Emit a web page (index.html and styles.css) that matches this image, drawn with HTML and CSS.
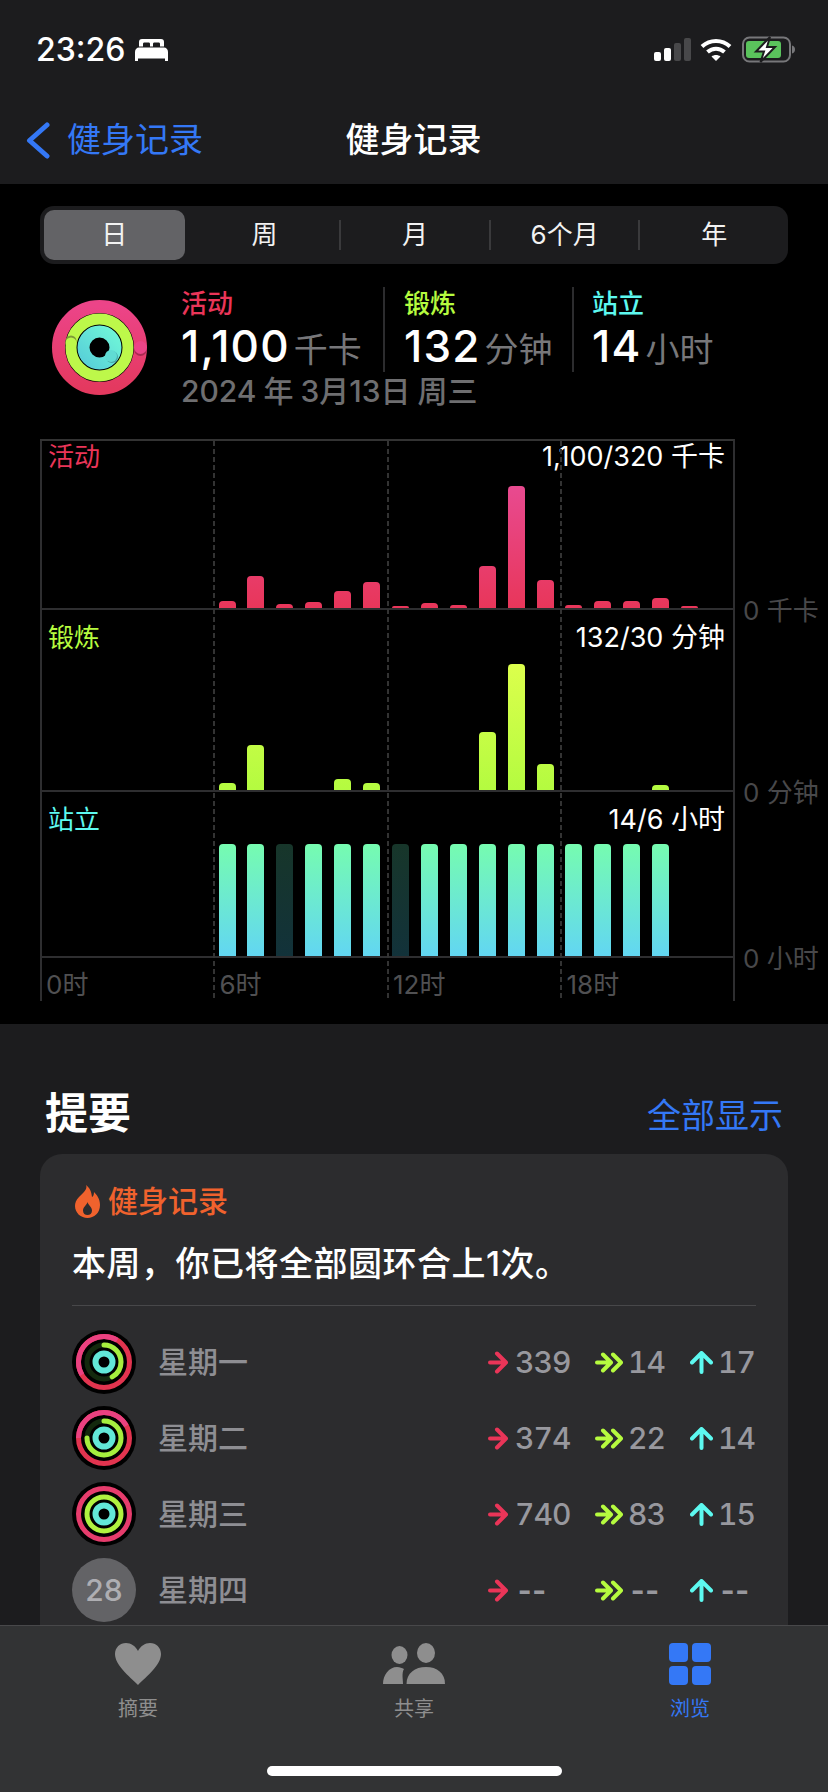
FILE: index.html
```html
<!DOCTYPE html>
<html lang="zh-CN">
<head>
    <meta charset="UTF-8">
    <meta name="viewport" content="width=device-width, initial-scale=1.0">
    <title>健身记录</title>
    <link rel="stylesheet" href="styles.css">
</head>
<body>

<div class="screen">
    <main class="content">
        <header class="top">
            <div class="status">
                <div class="status-left">
                    <span class="clock">23:26</span>
                    <svg class="bed" width="33" height="22" viewBox="0 0 33 22">
                        <path fill="#fff" d="M4 7.500V3C4 1 5 0 7 0H26C28 0 29 1 29 3V7.500H25V5C25 4 24.500 3.500 23.500 3.500H19.500C18.500 3.500 18 4 18 5V7.500H15V5C15 4 14.500 3.500 13.500 3.500H9.500C8.500 3.500 8 4 8 5V7.500Z"/>
                        <path fill="#fff" d="M0 13C0 10 2 8.500 4 8.500H29C31 8.500 33 10 33 13V22H30V19.500H3V22H0Z"/>
                    </svg>
                </div>
                <div class="status-right">
                    <svg width="37" height="23" viewBox="0 0 37 23">
                        <rect fill="#fff" x="0" y="14" width="7" height="9" rx="2"/>
                        <rect fill="#fff" x="10" y="10" width="7" height="13" rx="2"/>
                        <rect fill="#48484a" x="20" y="5" width="7" height="18" rx="2"/>
                        <rect fill="#48484a" x="30" y="0" width="7" height="23" rx="2"/>
                    </svg>
                    <svg width="32" height="23" viewBox="0 0 32 23">
                        <path fill="none" stroke="#fff" stroke-width="4" d="M2 8.5C10 1 22 1 30 8.5"/>
                        <path fill="none" stroke="#fff" stroke-width="4" d="M7.5 14C12.5 9.5 19.5 9.5 24.500 14"/>
                        <path fill="#fff" d="M11.500 18.500C14 16.500 18 16.500 20.500 18.500L16 23Z"/>
                    </svg>
                    <svg class="battery" width="53" height="27" viewBox="0 0 53 27">
                        <rect fill="none" stroke="#77777a" stroke-width="2" x="1" y="1.500" width="47" height="24" rx="6.500"/>
                        <rect fill="#5ac35c" x="4" y="5" width="35" height="17" rx="3"/>
                        <path fill="#77777a" d="M50 9.500C52 10 53 11.500 53 13.500C53 15.500 52 17 50 17.500Z"/>
                        <path fill="#fff" stroke="#1c1c1e" stroke-width="2" d="M28 1L14 15.500H22L18.500 26L33 11H25Z"/>
                    </svg>
                </div>
            </div>
            <nav class="nav">
                <a class="back" href="#">
                    <svg width="24" height="37" viewBox="0 0 24 37">
                        <path fill="none" stroke="#3478f6" stroke-width="5" stroke-linecap="round" stroke-linejoin="round" d="M21 3L3.500 18.500L21 34"/>
                    </svg>
                    <span>健身记录</span>
                </a>
                <h1 class="nav-title">健身记录</h1>
            </nav>
        </header>

        <section class="overview">
            <div class="segments">
                <span class="segment active">日</span>
                <span class="segment">周</span>
                <span class="segment line">月</span>
                <span class="segment line">6个月</span>
                <span class="segment line">年</span>
            </div>

            <div class="today">
                <svg class="today-ring" width="95" height="95" viewBox="0 0 95 95">
                    <defs>
                        <linearGradient id="bigRed" x1="0" y1="0" x2="0" y2="1">
                            <stop offset="0" stop-color="#ec4488"/>
                            <stop offset="1" stop-color="#e4395f"/>
                        </linearGradient>
                        <linearGradient id="bigCyan" x1="1" y1="0" x2="0" y2="1">
                            <stop offset="0" stop-color="#6ff5d8"/>
                            <stop offset="1" stop-color="#58d0d8"/>
                        </linearGradient>
                    </defs>
                    <circle cx="47.500" cy="47.500" r="41" fill="none" stroke="url(#bigRed)" stroke-width="13"/>
                    <circle cx="88.500" cy="49.500" r="6.500" fill="#a82a50"/>
                    <circle cx="88.500" cy="47.500" r="6.500" fill="#ec4488"/>
                    <circle cx="47.500" cy="47.500" r="28.500" fill="none" stroke="#bdf84a" stroke-width="11"/>
                    <circle cx="19" cy="41" r="5.500" fill="#7d9a38"/>
                    <circle cx="19" cy="43" r="5.500" fill="#bdf84a"/>
                    <circle cx="47.500" cy="47.500" r="16" fill="none" stroke="url(#bigCyan)" stroke-width="12"/>
                    <circle cx="60" cy="57" r="6" fill="#4aa8a8"/>
                    <circle cx="59" cy="56" r="6" fill="#60dcd4"/>
                </svg>
                <div class="today-text">
                    <div class="stats">
                        <div class="stat stat-move">
                            <div class="stat-label red">活动</div>
                            <div class="stat-value">1,100<small>千卡</small></div>
                        </div>
                        <div class="stat stat-exercise">
                            <div class="stat-label green">锻炼</div>
                            <div class="stat-value">132<small>分钟</small></div>
                        </div>
                        <div class="stat stat-stand">
                            <div class="stat-label cyan">站立</div>
                            <div class="stat-value">14<small>小时</small></div>
                        </div>
                    </div>
                    <div class="today-date">2024 年 3月13日 周三</div>
                </div>
            </div>

            <div class="chart">
                <div class="grid-lines"><i></i><i></i><i></i><i></i></div>

                <div class="chart-row row-move">
                    <div class="plot">
                        <div class="plot-head">
                            <span class="red">活动</span>
                            <span class="goal">1,100/320 千卡</span>
                        </div>
                        <div class="bars">
                            <i class="bar bar-red" style="height:7px"></i>
                            <i class="bar bar-red" style="height:32px"></i>
                            <i class="bar bar-red" style="height:4px"></i>
                            <i class="bar bar-red" style="height:6px"></i>
                            <i class="bar bar-red" style="height:17px"></i>
                            <i class="bar bar-red" style="height:26px"></i>
                            <i class="bar bar-red" style="height:2px"></i>
                            <i class="bar bar-red" style="height:5px"></i>
                            <i class="bar bar-red" style="height:3px"></i>
                            <i class="bar bar-red" style="height:42px"></i>
                            <i class="bar bar-red" style="height:122px"></i>
                            <i class="bar bar-red" style="height:28px"></i>
                            <i class="bar bar-red" style="height:3px"></i>
                            <i class="bar bar-red" style="height:7px"></i>
                            <i class="bar bar-red" style="height:7px"></i>
                            <i class="bar bar-red" style="height:10px"></i>
                            <i class="bar bar-red" style="height:2px"></i>
                        </div>
                    </div>
                    <span class="axis">0 千卡</span>
                </div>

                <div class="chart-row row-exercise">
                    <div class="plot">
                        <div class="plot-head">
                            <span class="green">锻炼</span>
                            <span class="goal">132/30 分钟</span>
                        </div>
                        <div class="bars">
                            <i class="bar bar-green" style="height:7px"></i>
                            <i class="bar bar-green" style="height:45px"></i>
                            <i class="bar bar-green" style="height:0"></i>
                            <i class="bar bar-green" style="height:0"></i>
                            <i class="bar bar-green" style="height:11px"></i>
                            <i class="bar bar-green" style="height:7px"></i>
                            <i class="bar bar-green" style="height:0"></i>
                            <i class="bar bar-green" style="height:0"></i>
                            <i class="bar bar-green" style="height:0"></i>
                            <i class="bar bar-green" style="height:58px"></i>
                            <i class="bar bar-green" style="height:126px"></i>
                            <i class="bar bar-green" style="height:26px"></i>
                            <i class="bar bar-green" style="height:0"></i>
                            <i class="bar bar-green" style="height:0"></i>
                            <i class="bar bar-green" style="height:0"></i>
                            <i class="bar bar-green" style="height:5px"></i>
                        </div>
                    </div>
                    <span class="axis">0 分钟</span>
                </div>

                <div class="chart-row row-stand">
                    <div class="plot">
                        <div class="plot-head">
                            <span class="cyan">站立</span>
                            <span class="goal">14/6 小时</span>
                        </div>
                        <div class="bars">
                            <i class="bar bar-cyan"></i>
                            <i class="bar bar-cyan"></i>
                            <i class="bar bar-dim"></i>
                            <i class="bar bar-cyan"></i>
                            <i class="bar bar-cyan"></i>
                            <i class="bar bar-cyan"></i>
                            <i class="bar bar-dim"></i>
                            <i class="bar bar-cyan"></i>
                            <i class="bar bar-cyan"></i>
                            <i class="bar bar-cyan"></i>
                            <i class="bar bar-cyan"></i>
                            <i class="bar bar-cyan"></i>
                            <i class="bar bar-cyan"></i>
                            <i class="bar bar-cyan"></i>
                            <i class="bar bar-cyan"></i>
                            <i class="bar bar-cyan"></i>
                        </div>
                    </div>
                    <span class="axis">0 小时</span>
                </div>

                <div class="hours">
                    <span>0时</span>
                    <span>6时</span>
                    <span>12时</span>
                    <span>18时</span>
                </div>
            </div>
        </section>

        <section class="summary">
            <div class="summary-head">
                <h2>提要</h2>
                <a href="#">全部显示</a>
            </div>

            <div class="card">
                <div class="card-title">
                    <svg width="25" height="33" viewBox="0 0 25 33">
                        <path fill="#f0622d" fill-rule="evenodd" d="M11 0C13 4 8 8 4 12C1 15 0 18 0 21C0 28 6 33 12.500 33C19 33 25 28 25 20C25 14 22 10 19 7C19 10 18 11.500 17 12C16.500 7 15 3 11 0ZM12.500 17C13 20 17 22 17 25.500C17 28.500 15 30 12.500 30C10 30 8 28.500 8 25.500C8 22 12 20 12.500 17Z"/>
                    </svg>
                    <span>健身记录</span>
                </div>
                <p class="card-text">本周&#xFF0C;你已将全部圆环合上1次。</p>

                <div class="days">
                    <div class="day">
                        <svg class="day-ring" width="64" height="64" viewBox="0 0 64 64">
                            <circle cx="32" cy="32" r="32" fill="#000"/>
                            <circle cx="32" cy="32" r="25.500" fill="none" stroke="#e2344f" stroke-width="5"/>
                            <circle class="arc" cx="32" cy="32" r="25.500" stroke="#ea4180" pathLength="100" stroke-dasharray="42 100" transform="rotate(150 32 32)"/>
                            <circle cx="32" cy="32" r="17" fill="none" stroke="#13290d" stroke-width="5"/>
                            <circle class="arc round" cx="32" cy="32" r="17" stroke="#a6ee3e" pathLength="100" stroke-dasharray="42 100" transform="rotate(-90 32 32)"/>
                            <circle cx="32" cy="32" r="8.500" fill="none" stroke="#62e8d8" stroke-width="6"/>
                        </svg>
                        <span class="day-name">星期一</span>
                        <div class="metric metric-move">
                            <svg width="20" height="23" viewBox="0 0 20 23"><path class="icon-red" d="M2 11.500H18M9 2.500L18 11.500L9 20.500"/></svg>
                            <span>339</span>
                        </div>
                        <div class="metric metric-exercise">
                            <svg width="28" height="21" viewBox="0 0 28 21"><path class="icon-green" d="M2 10.500H15M8 2.500L16 10.500L8 18.500M18 2.500L26 10.500L18 18.500"/></svg>
                            <span>14</span>
                        </div>
                        <div class="metric metric-stand">
                            <svg width="23" height="23" viewBox="0 0 23 23"><path class="icon-cyan" d="M11.500 21V3M2 11.500L11.500 2L21 11.500"/></svg>
                            <span>17</span>
                        </div>
                    </div>

                    <div class="day">
                        <svg class="day-ring" width="64" height="64" viewBox="0 0 64 64">
                            <circle cx="32" cy="32" r="32" fill="#000"/>
                            <circle cx="32" cy="32" r="25.500" fill="none" stroke="#e2344f" stroke-width="5"/>
                            <circle class="arc" cx="32" cy="32" r="25.500" stroke="#ea4180" pathLength="100" stroke-dasharray="42 100" transform="rotate(180 32 32)"/>
                            <circle cx="32" cy="32" r="17" fill="none" stroke="#13290d" stroke-width="5"/>
                            <circle class="arc round" cx="32" cy="32" r="17" stroke="#a6ee3e" pathLength="100" stroke-dasharray="75 100" transform="rotate(-90 32 32)"/>
                            <circle cx="32" cy="32" r="8.500" fill="none" stroke="#62e8d8" stroke-width="6"/>
                        </svg>
                        <span class="day-name">星期二</span>
                        <div class="metric metric-move">
                            <svg width="20" height="23" viewBox="0 0 20 23"><path class="icon-red" d="M2 11.500H18M9 2.500L18 11.500L9 20.500"/></svg>
                            <span>374</span>
                        </div>
                        <div class="metric metric-exercise">
                            <svg width="28" height="21" viewBox="0 0 28 21"><path class="icon-green" d="M2 10.500H15M8 2.500L16 10.500L8 18.500M18 2.500L26 10.500L18 18.500"/></svg>
                            <span>22</span>
                        </div>
                        <div class="metric metric-stand">
                            <svg width="23" height="23" viewBox="0 0 23 23"><path class="icon-cyan" d="M11.500 21V3M2 11.500L11.500 2L21 11.500"/></svg>
                            <span>14</span>
                        </div>
                    </div>

                    <div class="day">
                        <svg class="day-ring" width="64" height="64" viewBox="0 0 64 64">
                            <circle cx="32" cy="32" r="32" fill="#000"/>
                            <circle cx="32" cy="32" r="25.500" fill="none" stroke="#e63c6c" stroke-width="5"/>
                            <circle cx="32" cy="32" r="17" fill="none" stroke="#b0f240" stroke-width="5"/>
                            <circle cx="32" cy="32" r="8.500" fill="none" stroke="#62e8d8" stroke-width="6"/>
                        </svg>
                        <span class="day-name">星期三</span>
                        <div class="metric metric-move">
                            <svg width="20" height="23" viewBox="0 0 20 23"><path class="icon-red" d="M2 11.500H18M9 2.500L18 11.500L9 20.500"/></svg>
                            <span>740</span>
                        </div>
                        <div class="metric metric-exercise">
                            <svg width="28" height="21" viewBox="0 0 28 21"><path class="icon-green" d="M2 10.500H15M8 2.500L16 10.500L8 18.500M18 2.500L26 10.500L18 18.500"/></svg>
                            <span>83</span>
                        </div>
                        <div class="metric metric-stand">
                            <svg width="23" height="23" viewBox="0 0 23 23"><path class="icon-cyan" d="M11.500 21V3M2 11.500L11.500 2L21 11.500"/></svg>
                            <span>15</span>
                        </div>
                    </div>

                    <div class="day">
                        <span class="day-date">28</span>
                        <span class="day-name">星期四</span>
                        <div class="metric metric-move empty">
                            <svg width="20" height="23" viewBox="0 0 20 23"><path class="icon-red" d="M2 11.500H18M9 2.500L18 11.500L9 20.500"/></svg>
                            <span>--</span>
                        </div>
                        <div class="metric metric-exercise empty">
                            <svg width="28" height="21" viewBox="0 0 28 21"><path class="icon-green" d="M2 10.500H15M8 2.500L16 10.500L8 18.500M18 2.500L26 10.500L18 18.500"/></svg>
                            <span>--</span>
                        </div>
                        <div class="metric metric-stand empty">
                            <svg width="23" height="23" viewBox="0 0 23 23"><path class="icon-cyan" d="M11.500 21V3M2 11.500L11.500 2L21 11.500"/></svg>
                            <span>--</span>
                        </div>
                    </div>
                </div>
            </div>
        </section>
    </main>

    <footer class="tabbar">
        <div class="tabs">
            <a class="tab" href="#">
                <svg width="46" height="42" viewBox="0 0 46 42">
                    <path fill="#8e8e8e" d="M23 42C14 33 0 22 0 11C0 4.500 5 0 11 0C16 0 20.500 3 23 8C25.500 3 30 0 35 0C41 0 46 4.500 46 11C46 22 32 33 23 42Z"/>
                </svg>
                <span>摘要</span>
            </a>
            <a class="tab" href="#">
                <svg width="62" height="42" viewBox="0 0 62 42">
                    <g fill="#8e8e8e">
                        <ellipse cx="16.500" cy="12" rx="8" ry="9"/>
                        <ellipse cx="43" cy="10" rx="9" ry="10"/>
                        <path d="M23.500 41C23.500 30 32 24 43 24C54 24 62 30 62 41Z"/>
                        <path d="M0 41C0 32 6 24 14 24C17 24 19 25 21 26C18.500 30 20 36 20 41Z"/>
                    </g>
                </svg>
                <span>共享</span>
            </a>
            <a class="tab active" href="#">
                <svg width="42" height="42" viewBox="0 0 42 42">
                    <g fill="#3478f6">
                        <rect x="0" y="0" width="19" height="19" rx="4"/>
                        <rect x="23" y="0" width="19" height="19" rx="4"/>
                        <rect x="0" y="23" width="19" height="19" rx="4"/>
                        <rect x="23" y="23" width="19" height="19" rx="4"/>
                    </g>
                </svg>
                <span>浏览</span>
            </a>
        </div>
        <div class="home-bar"></div>
    </footer>
</div>

</body>
</html>
```

FILE: styles.css
```css
* {
    box-sizing: border-box;
}
body {
    margin: 0;
    background-color: #000;
    color: #fff;
    font-family: Inter, "Noto Sans CJK SC", sans-serif;
}
a {
    text-decoration: none;
}
h1, h2, p {
    margin: 0;
}
.red { color: #ea3558; }
.green { color: #b6fb3f; }
.cyan { color: #5df9f0; }

.screen {
    width: 828px;
    height: 1792px;
    display: flex;
    flex-direction: column;
    overflow: hidden;
}
.content {
    flex: 1;
    min-height: 0;
    overflow: hidden;
}

/* status bar and nav */
.top {
    height: 184px;
    background-color: #1c1c1e;
}
.status {
    height: 99px;
    padding: 0 33px 0 36px;
    display: flex;
    justify-content: space-between;
    align-items: center;
}
.status-left {
    display: flex;
    align-items: center;
    gap: 10px;
}
.clock {
    font-size: 32px;
    font-weight: 500;
    line-height: 40px;
}
.status-right {
    display: flex;
    align-items: center;
    gap: 9px;
}
.battery {
    margin-left: 1px;
}
.nav {
    height: 82px;
    padding-left: 26px;
    display: grid;
    grid-template-columns: 1fr auto 1fr;
    align-items: center;
    padding-right: 27px;
}
.back {
    display: flex;
    align-items: center;
    gap: 17px;
    color: #3478f6;
    font-size: 34px;
    line-height: 44px;
}
.nav-title {
    grid-column: 2;
    font-size: 34px;
    font-weight: 500;
    line-height: 44px;
}

/* segmented control */
.segments {
    margin: 22px 40px 0;
    height: 58px;
    background-color: #1c1c1e;
    border-radius: 14px;
    display: grid;
    grid-template-columns: repeat(5, 1fr);
    align-items: center;
}
.segment {
    height: 50px;
    font-size: 26px;
    line-height: 50px;
    text-align: center;
    color: #f2f2f2;
}
.segment.active {
    margin: 0 5px 0 4px;
    background-color: #636366;
    border-radius: 10px;
}
.segment.line {
    border-left: 2px solid #3a3a3c;
    height: 30px;
    line-height: 30px;
}

/* today summary */
.today {
    margin-top: 23px;
    padding-left: 52px;
    display: flex;
    gap: 34px;
}
.today-ring {
    margin-top: 13px;
}
.stats {
    display: flex;
}
.stat {
    height: 85px;
}
.stat-move {
    width: 204px;
    border-right: 2px solid #2c2c2e;
}
.stat-exercise {
    width: 189px;
    padding-left: 19px;
    border-right: 2px solid #2c2c2e;
}
.stat-stand {
    padding-left: 18px;
}
.stat-label {
    font-size: 26px;
    font-weight: 500;
    line-height: 33px;
}
.stat-value {
    font-size: 44px;
    font-weight: 500;
    line-height: 52px;
    letter-spacing: 1.2px;
    white-space: nowrap;
}
.stat-value small {
    margin-left: 4px;
    font-size: 34px;
    font-weight: 400;
    letter-spacing: 0;
    color: #77777a;
}
.today-date {
    font-size: 30px;
    font-weight: 500;
    line-height: 38px;
    word-spacing: -1px;
    color: #6e6e70;
    white-space: nowrap;
}

/* chart */
.chart {
    position: relative;
    margin: 29px 0 0 40px;
    height: 585px;
}
.grid-lines {
    position: absolute;
    top: 0;
    left: 0;
    width: 695px;
    height: 562px;
    display: grid;
    grid-template-columns: repeat(4, 1fr);
    border-top: 2px solid #333;
    border-right: 2px solid #2e2e30;
}
.grid-lines i {
    background-image: repeating-linear-gradient(to bottom, #333 0 5px, transparent 5px 8px);
    background-size: 2px 100%;
    background-repeat: no-repeat;
}
.grid-lines i:first-child {
    background-image: linear-gradient(#2e2e30, #2e2e30);
}
.chart-row {
    display: flex;
}
.row-move { height: 171px; padding-top: 2px; }
.row-exercise { height: 182px; }
.row-stand { height: 166px; }
.plot {
    width: 694px;
    display: flex;
    flex-direction: column;
    border-bottom: 2px solid #2e2e30;
}
.plot-head {
    padding: 0 9px 0 8px;
    display: flex;
    justify-content: space-between;
    font-size: 26px;
    line-height: 32px;
}
.goal {
    font-size: 27px;
}
.row-exercise .plot-head,
.row-stand .plot-head {
    padding-top: 12px;
}
.bars {
    flex: 1;
    display: grid;
    grid-template-columns: repeat(24, 1fr);
    align-items: end;
}
.bar {
    display: block;
    width: 17px;
    margin-left: 5px;
    border-radius: 4px 4px 0 0;
}
.bar:first-child {
    grid-column-start: 7;
}
.bar-red {
    background: linear-gradient(#e84a90, #e8365a) bottom / 100% 122px no-repeat;
}
.bar-green {
    background: linear-gradient(#dcff4c, #b4fb40) bottom / 100% 126px no-repeat;
}
.bar-cyan {
    height: 112px;
    background: linear-gradient(#76fcb0, #62d6f2);
}
.bar-dim {
    height: 112px;
    background: linear-gradient(#17362a, #12323a);
}
.axis {
    align-self: flex-end;
    margin: 0 0 -17px 9px;
    font-size: 26px;
    line-height: 32px;
    color: #48484a;
    white-space: nowrap;
}
.hours {
    width: 694px;
    padding-top: 11px;
    display: grid;
    grid-template-columns: repeat(4, 1fr);
    font-size: 26px;
    line-height: 32px;
    color: #505052;
}
.hours span {
    padding-left: 6px;
}

/* summary */
.summary {
    background-color: #1c1c1e;
    padding-top: 59px;
}
.summary-head {
    margin: 0 45px 11px 45px;
    height: 60px;
    display: flex;
    justify-content: space-between;
    align-items: center;
}
.summary-head h2 {
    font-size: 43px;
    font-weight: 700;
    line-height: 60px;
}
.summary-head a {
    color: #3478f6;
    font-size: 34px;
    line-height: 44px;
    margin-top: 5px;
}
.card {
    margin: 0 40px;
    padding: 30px 32px 40px;
    background-color: #2c2c2e;
    border-radius: 22px;
}
.card-title {
    height: 34px;
    display: flex;
    align-items: center;
    gap: 8px;
    padding-left: 3px;
    color: #f0622d;
    font-size: 30px;
    font-weight: 500;
    line-height: 34px;
}
.card-text {
    margin-top: 24px;
    padding-bottom: 19px;
    font-size: 34px;
    font-weight: 500;
    line-height: 44px;
    letter-spacing: 0.5px;
    white-space: nowrap;
    border-bottom: 1px solid #48484a;
}
.days {
    padding-top: 18px;
}
.day {
    height: 76px;
    padding-right: 2px;
    display: flex;
    align-items: center;
}
.day-ring {
    flex: none;
}
.arc {
    fill: none;
    stroke-width: 5;
}
.arc.round {
    stroke-linecap: round;
}
.day-date {
    flex: none;
    width: 64px;
    height: 64px;
    border-radius: 50%;
    background-color: #636366;
    color: #aeaeb2;
    font-size: 30px;
    font-weight: 500;
    line-height: 64px;
    text-align: center;
}
.day-name {
    margin-left: 22px;
    margin-right: auto;
    font-size: 30px;
    font-weight: 500;
    line-height: 40px;
    color: #8e8e93;
}
.metric {
    display: flex;
    align-items: center;
    font-size: 30px;
    font-weight: 500;
    line-height: 40px;
    letter-spacing: -1px;
    color: #98989e;
    font-variant-numeric: tabular-nums;
    white-space: nowrap;
}
.metric span {
    text-align: right;
}
.metric.empty span {
    text-align: left;
    font-weight: 700;
    letter-spacing: -5px;
}
.metric-move span { width: 54px; margin-left: 7px; }
.metric-exercise { margin-left: 26px; }
.metric-exercise span { width: 36px; margin-left: 5px; }
.metric-stand { margin-left: 26px; }
.metric-stand span { width: 36px; margin-left: 5px; }
.metric svg path {
    fill: none;
    stroke-width: 4;
    stroke-linecap: round;
    stroke-linejoin: round;
}
.icon-red { stroke: #ea3558; }
.icon-green { stroke: #b6fb3f; }
.icon-cyan { stroke: #5df9f0; }

/* tab bar */
.tabbar {
    flex: none;
    height: 167px;
    background-color: #323334;
    border-top: 1px solid #48484a;
    padding-top: 17px;
}
.tabs {
    display: grid;
    grid-template-columns: repeat(3, 1fr);
}
.tab {
    display: flex;
    flex-direction: column;
    align-items: center;
    gap: 12px;
    color: #8e8e8e;
    font-size: 20px;
    line-height: 24px;
}
.tab.active {
    color: #3478f6;
}
.home-bar {
    width: 295px;
    height: 10px;
    margin: 45px auto 0;
    border-radius: 5px;
    background-color: #fff;
}
```
